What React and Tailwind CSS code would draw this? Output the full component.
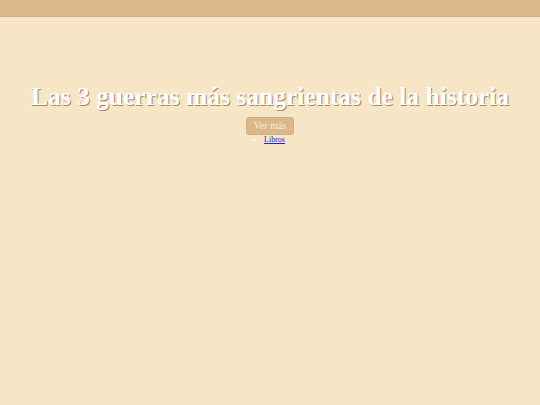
export default function App() {
  return (
    <div className="min-h-[405px] bg-[#f6e6c5] font-['Liberation_Serif',serif]">
      <header className="h-[17px] bg-[#dbb88a] border-b border-[#d4a58a]" />
      <main className="flex flex-col items-center pt-[64px]">
        <h1 className="text-[25.5px] font-bold leading-[32px] text-white [text-shadow:1px_1px_0_#a98866]">
          Las 3 guerras más sangrientas de la historia
        </h1>
        <button
          type="button"
          className="mt-[4px] h-[18px] rounded-[3px] border border-[#d2ae84] bg-[#dbb88a] px-[7px] text-[10px] leading-[16px] text-[#f8ecd6]"
        >
          Ver más
        </button>
        <ul className="list-disc pl-[9px] text-[8px] leading-[9px] marker:text-white">
          <li>
            <a href="#" className="text-[#2222cc] underline">
              Libros
            </a>
          </li>
        </ul>
      </main>
    </div>
  );
}
